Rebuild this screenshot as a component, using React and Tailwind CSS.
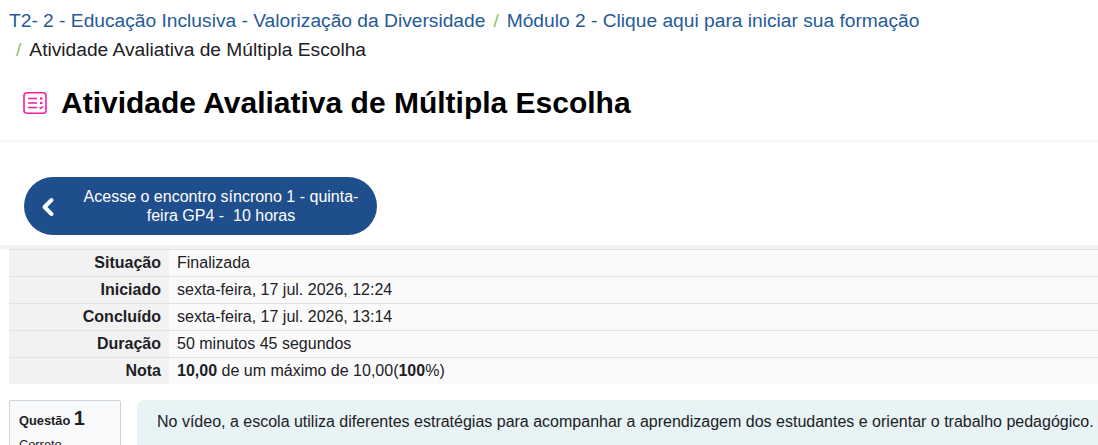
import { ChevronLeft } from 'lucide-react';

const rows = [
  { label: 'Situação', value: 'Finalizada' },
  { label: 'Iniciado', value: 'sexta-feira, 17 jul. 2026, 12:24' },
  { label: 'Concluído', value: 'sexta-feira, 17 jul. 2026, 13:14' },
  { label: 'Duração', value: '50 minutos 45 segundos' },
  {
    label: 'Nota',
    value: (
      <>
        <b>10,00</b> de um máximo de 10,00(<b>100</b>%)
      </>
    ),
  },
];

const QuizIcon = () => (
  <svg width="24" height="24" viewBox="0 0 24 24" fill="none" stroke="#f91f9b" strokeWidth="1.6">
    <rect x="1" y="1.8" width="22" height="20.4" rx="3" />
    <path d="M5 7.5h9M5 12h9M5 16.5h9" />
    <path d="M17 7.5h2.5" strokeWidth="2.2" />
    <path d="M17 12h2.5" strokeWidth="2.2" />
    <path d="M16.6 16.2l1.3 1.3 2.2-2.4" strokeWidth="1.4" />
  </svg>
);

export default function App() {
  return (
    <div className="h-[445px] w-[1098px] overflow-hidden bg-white font-['Liberation_Sans',Arial,sans-serif] text-[#1d2125]">
      {/* Breadcrumb */}
      <div className="h-[143px] border-b-[3px] border-[#f8f8f8]">
        <div className="pl-[9px] pt-[6px] text-[19.2px] leading-[29px]">
          <div className="whitespace-nowrap text-[#255a99]">
            T2- 2 - Educação Inclusiva - Valorização da Diversidade
            <span className="px-[8px] text-[#8dc26f]">/</span>
            Módulo 2 - Clique aqui para iniciar sua formação
          </div>
          <div className="whitespace-nowrap pl-[7px]">
            <span className="pr-[8px] text-[#8dc26f]">/</span>
            Atividade Avaliativa de Múltipla Escolha
          </div>
        </div>
        <div className="mt-[19px] flex items-center pl-[23px]">
          <QuizIcon />
          <h1 className="ml-[14px] text-[30px] font-bold leading-[40px] text-black">
            Atividade Avaliativa de Múltipla Escolha
          </h1>
        </div>
      </div>

      {/* Activity nav */}
      <div className="h-[106px] border-b-[4px] border-[#f2f2f2] pl-[24px] pt-[34px]">
        <a className="flex h-[58px] w-[353px] items-center rounded-[29px] bg-[#1f4e8c] text-white">
          <ChevronLeft className="ml-[10px] mt-[1px] shrink-0" size={28} strokeWidth={3.4} />
          <span className="ml-[13px] w-[292px] text-center text-[16px] leading-[19.5px] whitespace-pre">
            {'Acesse o encontro síncrono 1 - quinta-\nfeira GP4 -  10 horas'}
          </span>
        </a>
      </div>

      {/* Review summary */}
      <div className="pl-[9px]">
        <div className="border-t border-[#dee2e6]">
          {rows.map((row, i) => (
            <div key={row.label} className={`flex ${i > 0 ? 'h-[27px] border-t border-[#dee2e6]' : 'h-[26px]'}`}>
              <div className="flex w-[160px] items-center justify-end bg-[#f2f2f2] pr-[8px] text-[16px] font-bold">
                {row.label}
              </div>
              <div className="flex flex-1 items-center bg-[#fafafa] pl-[8px] text-[16px]">
                <span>{row.value}</span>
              </div>
            </div>
          ))}
        </div>
      </div>

      {/* First question */}
      <div className="mt-[16px] flex gap-[16px] pl-[9px]">
        <div className="h-[60px] w-[112px] rounded-[2px] border border-[#ced4da] bg-[#f8f9fa] px-[9px] pt-[5px] text-[12.8px] leading-[24px] font-bold">
          Questão <span className="text-[20px]">1</span>
          <div className="font-normal">Correto</div>
        </div>
        <div className="h-[60px] flex-1 rounded-tl-[8px] bg-[#e7f3f5] pl-[20px] pt-[12px] text-[16px] leading-[19px] whitespace-nowrap">
          No vídeo, a escola utiliza diferentes estratégias para acompanhar a aprendizagem dos estudantes e orientar o trabalho pedagógico.
        </div>
      </div>
    </div>
  );
}
